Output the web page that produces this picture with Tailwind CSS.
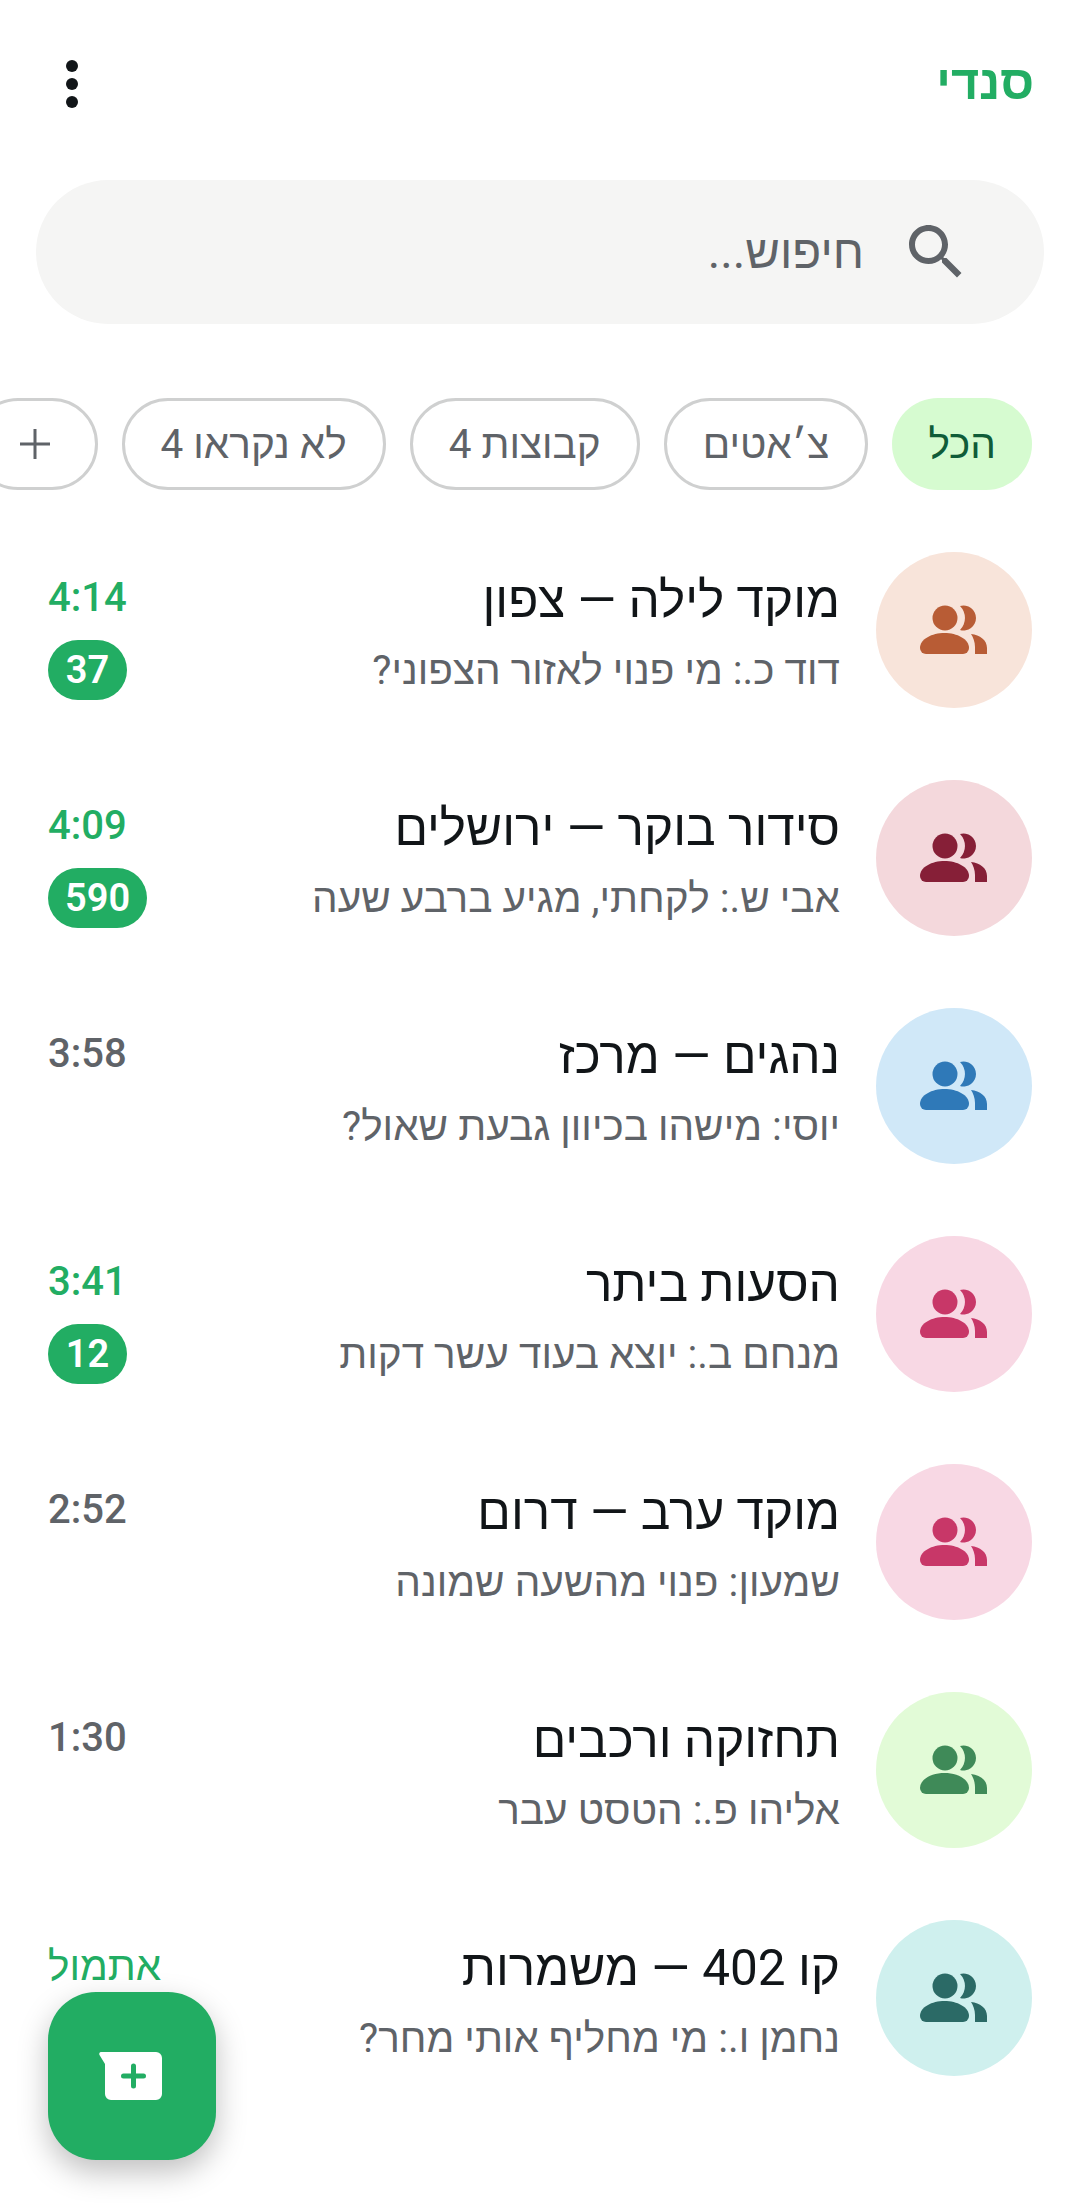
<!DOCTYPE html>
<html lang="he" dir="rtl">
<head>
<meta charset="utf-8">
<script src="https://cdn.jsdelivr.net/npm/@tailwindcss/browser@4"></script>
</head>
<body class="bg-white">
<div class="relative w-[1080px] h-[2208px] overflow-hidden bg-white font-['Roboto','Noto_Sans',sans-serif]">
  <header class="h-[180px] flex items-start justify-between pr-[46px] pl-[66px] pt-[59px]">
    <span class="text-[48.5px] leading-[48px] font-bold text-[#22ad63]">סנדי</span>
    <svg class="w-[12px] h-[48px] mt-[1px]" viewBox="0 0 12 48"><circle cx="6" cy="6" r="6" fill="#111518"/><circle cx="6" cy="24" r="6" fill="#111518"/><circle cx="6" cy="42" r="6" fill="#111518"/></svg>
  </header>
  <div class="mx-[36px] h-[144px] rounded-[72px] bg-[#f5f5f4] flex items-center pr-[72px] gap-[36px]">
    <svg class="w-[72px] h-[72px]" viewBox="0 0 24 24" fill="#5f6368"><path d="M15.500 14h-.79l-.28-.27C15.410 12.590 16 11.110 16 9.500 16 5.910 13.090 3 9.500 3S3 5.910 3 9.500 5.910 16 9.500 16c1.610 0 3.090-.59 4.230-1.570l.27.28v.79l5 4.990L20.490 19l-4.990-5zm-6 0C7.010 14 5 11.990 5 9.500S7.010 5 9.500 5 14 7.010 14 9.500 11.990 14 9.500 14z"/></svg>
    <span class="text-[47.5px] text-[#5f6368] relative top-[1px]">חיפוש...</span>
  </div>
  <div class="mt-[74px] h-[92px] flex gap-[24px] pr-[48px] whitespace-nowrap text-[40.5px]">
    <span class="shrink-0 h-[92px] rounded-[46px] bg-[#d6fbd0] text-[#0f5c38] px-[36px] flex items-center">הכל</span>
    <span class="shrink-0 h-[92px] rounded-[46px] border-[3px] border-[#cfd0d0] text-[#5f6368] px-[36px] flex items-center">צ׳אטים</span>
    <span class="shrink-0 h-[92px] rounded-[46px] border-[3px] border-[#cfd0d0] text-[#5f6368] px-[36px] flex items-center">קבוצות 4</span>
    <span class="shrink-0 h-[92px] rounded-[46px] border-[3px] border-[#cfd0d0] text-[#5f6368] px-[36px] flex items-center">לא נקראו 4</span>
    <span class="shrink-0 h-[92px] rounded-[46px] border-[3px] border-[#cfd0d0] text-[#5f6368] px-[45px] flex items-center"><svg class="w-[30px] h-[30px]" viewBox="0 0 30 30" fill="#5f6368"><path d="M13.500 0h3v13.500H30v3H16.500V30h-3V16.500H0v-3h13.500z"/></svg></span>
  </div>
  <ul class="mt-[62px]">
    <li class="h-[228px] flex items-start pr-[48px] pl-[48px]">
      <div class="w-[156px] h-[156px] shrink-0 rounded-full bg-[#f8e4da] text-[#b85c35] flex items-center justify-center"><svg class="w-[72px] h-[72px]" viewBox="0 0 72 72" fill="currentColor"><circle cx="27" cy="24" r="12.500"/><path d="M42 12A12.500 12.500 0 1 1 42 36 17 17 0 0 0 42 12Z"/><path d="M8 60H45a6 6 0 0 0 6-6c0-9-12-15-24.500-15S2 45 2 54a6 6 0 0 0 6 6Z"/><path d="M53 40C62 41 69 46 69 54V60H57V53C57 48 55 43 53 40Z"/></svg></div>
      <div class="flex-1 min-w-0 mr-[36px]"><div class="text-[49.5px] leading-[66px] text-[#111518] mt-[15px]">מוקד לילה — צפון</div><div class="text-[40.5px] leading-[54px] text-[#5f6368] mt-[10px]">דוד כ.: מי פנוי לאזור הצפוני?</div></div>
      <div class="flex flex-col items-end mt-[26px]"><span class="text-[40px] leading-[40px] font-medium text-[#22ad63]" dir="ltr">4:14</span><span class="mt-[22px] h-[60px] min-w-[79px] px-[17px] rounded-[30px] bg-[#22ad63] text-white text-[38px] font-semibold flex items-center justify-center">37</span></div>
    </li>
    <li class="h-[228px] flex items-start pr-[48px] pl-[48px]">
      <div class="w-[156px] h-[156px] shrink-0 rounded-full bg-[#f4d8dc] text-[#861f37] flex items-center justify-center"><svg class="w-[72px] h-[72px]" viewBox="0 0 72 72" fill="currentColor"><circle cx="27" cy="24" r="12.500"/><path d="M42 12A12.500 12.500 0 1 1 42 36 17 17 0 0 0 42 12Z"/><path d="M8 60H45a6 6 0 0 0 6-6c0-9-12-15-24.500-15S2 45 2 54a6 6 0 0 0 6 6Z"/><path d="M53 40C62 41 69 46 69 54V60H57V53C57 48 55 43 53 40Z"/></svg></div>
      <div class="flex-1 min-w-0 mr-[36px]"><div class="text-[49.5px] leading-[66px] text-[#111518] mt-[15px]">סידור בוקר — ירושלים</div><div class="text-[40.5px] leading-[54px] text-[#5f6368] mt-[10px]">אבי ש.: לקחתי, מגיע ברבע שעה</div></div>
      <div class="flex flex-col items-end mt-[26px]"><span class="text-[40px] leading-[40px] font-medium text-[#22ad63]" dir="ltr">4:09</span><span class="mt-[22px] h-[60px] min-w-[79px] px-[17px] rounded-[30px] bg-[#22ad63] text-white text-[38px] font-semibold flex items-center justify-center">590</span></div>
    </li>
    <li class="h-[228px] flex items-start pr-[48px] pl-[48px]">
      <div class="w-[156px] h-[156px] shrink-0 rounded-full bg-[#d0e8f8] text-[#2f79b8] flex items-center justify-center"><svg class="w-[72px] h-[72px]" viewBox="0 0 72 72" fill="currentColor"><circle cx="27" cy="24" r="12.500"/><path d="M42 12A12.500 12.500 0 1 1 42 36 17 17 0 0 0 42 12Z"/><path d="M8 60H45a6 6 0 0 0 6-6c0-9-12-15-24.500-15S2 45 2 54a6 6 0 0 0 6 6Z"/><path d="M53 40C62 41 69 46 69 54V60H57V53C57 48 55 43 53 40Z"/></svg></div>
      <div class="flex-1 min-w-0 mr-[36px]"><div class="text-[49.5px] leading-[66px] text-[#111518] mt-[15px]">נהגים — מרכז</div><div class="text-[40.5px] leading-[54px] text-[#5f6368] mt-[10px]">יוסי: מישהו בכיוון גבעת שאול?</div></div>
      <div class="flex flex-col items-end mt-[26px]"><span class="text-[40px] leading-[40px] font-medium text-[#5f6368]" dir="ltr">3:58</span></div>
    </li>
    <li class="h-[228px] flex items-start pr-[48px] pl-[48px]">
      <div class="w-[156px] h-[156px] shrink-0 rounded-full bg-[#f8d8e4] text-[#c83768] flex items-center justify-center"><svg class="w-[72px] h-[72px]" viewBox="0 0 72 72" fill="currentColor"><circle cx="27" cy="24" r="12.500"/><path d="M42 12A12.500 12.500 0 1 1 42 36 17 17 0 0 0 42 12Z"/><path d="M8 60H45a6 6 0 0 0 6-6c0-9-12-15-24.500-15S2 45 2 54a6 6 0 0 0 6 6Z"/><path d="M53 40C62 41 69 46 69 54V60H57V53C57 48 55 43 53 40Z"/></svg></div>
      <div class="flex-1 min-w-0 mr-[36px]"><div class="text-[49.5px] leading-[66px] text-[#111518] mt-[15px]">הסעות ביתר</div><div class="text-[40.5px] leading-[54px] text-[#5f6368] mt-[10px]">מנחם ב.: יוצא בעוד עשר דקות</div></div>
      <div class="flex flex-col items-end mt-[26px]"><span class="text-[40px] leading-[40px] font-medium text-[#22ad63]" dir="ltr">3:41</span><span class="mt-[22px] h-[60px] min-w-[79px] px-[17px] rounded-[30px] bg-[#22ad63] text-white text-[38px] font-semibold flex items-center justify-center">12</span></div>
    </li>
    <li class="h-[228px] flex items-start pr-[48px] pl-[48px]">
      <div class="w-[156px] h-[156px] shrink-0 rounded-full bg-[#f8d8e4] text-[#c83768] flex items-center justify-center"><svg class="w-[72px] h-[72px]" viewBox="0 0 72 72" fill="currentColor"><circle cx="27" cy="24" r="12.500"/><path d="M42 12A12.500 12.500 0 1 1 42 36 17 17 0 0 0 42 12Z"/><path d="M8 60H45a6 6 0 0 0 6-6c0-9-12-15-24.500-15S2 45 2 54a6 6 0 0 0 6 6Z"/><path d="M53 40C62 41 69 46 69 54V60H57V53C57 48 55 43 53 40Z"/></svg></div>
      <div class="flex-1 min-w-0 mr-[36px]"><div class="text-[49.5px] leading-[66px] text-[#111518] mt-[15px]">מוקד ערב — דרום</div><div class="text-[40.5px] leading-[54px] text-[#5f6368] mt-[10px]">שמעון: פנוי מהשעה שמונה</div></div>
      <div class="flex flex-col items-end mt-[26px]"><span class="text-[40px] leading-[40px] font-medium text-[#5f6368]" dir="ltr">2:52</span></div>
    </li>
    <li class="h-[228px] flex items-start pr-[48px] pl-[48px]">
      <div class="w-[156px] h-[156px] shrink-0 rounded-full bg-[#e2fbd7] text-[#3f8a58] flex items-center justify-center"><svg class="w-[72px] h-[72px]" viewBox="0 0 72 72" fill="currentColor"><circle cx="27" cy="24" r="12.500"/><path d="M42 12A12.500 12.500 0 1 1 42 36 17 17 0 0 0 42 12Z"/><path d="M8 60H45a6 6 0 0 0 6-6c0-9-12-15-24.500-15S2 45 2 54a6 6 0 0 0 6 6Z"/><path d="M53 40C62 41 69 46 69 54V60H57V53C57 48 55 43 53 40Z"/></svg></div>
      <div class="flex-1 min-w-0 mr-[36px]"><div class="text-[49.5px] leading-[66px] text-[#111518] mt-[15px]">תחזוקה ורכבים</div><div class="text-[40.5px] leading-[54px] text-[#5f6368] mt-[10px]">אליהו פ.: הטסט עבר</div></div>
      <div class="flex flex-col items-end mt-[26px]"><span class="text-[40px] leading-[40px] font-medium text-[#5f6368]" dir="ltr">1:30</span></div>
    </li>
    <li class="h-[228px] flex items-start pr-[48px] pl-[48px]">
      <div class="w-[156px] h-[156px] shrink-0 rounded-full bg-[#cff0ee] text-[#2b6a66] flex items-center justify-center"><svg class="w-[72px] h-[72px]" viewBox="0 0 72 72" fill="currentColor"><circle cx="27" cy="24" r="12.500"/><path d="M42 12A12.500 12.500 0 1 1 42 36 17 17 0 0 0 42 12Z"/><path d="M8 60H45a6 6 0 0 0 6-6c0-9-12-15-24.500-15S2 45 2 54a6 6 0 0 0 6 6Z"/><path d="M53 40C62 41 69 46 69 54V60H57V53C57 48 55 43 53 40Z"/></svg></div>
      <div class="flex-1 min-w-0 mr-[36px]"><div class="text-[49.5px] leading-[66px] text-[#111518] mt-[15px]">קו 402 — משמרות</div><div class="text-[40.5px] leading-[54px] text-[#5f6368] mt-[10px]">נחמן ו.: מי מחליף אותי מחר?</div></div>
      <div class="flex flex-col items-end mt-[26px]"><span class="text-[40.5px] leading-[40px] text-[#22ad63]">אתמול</span></div>
    </li>
  </ul>
  <button class="absolute left-[48px] top-[1992px] w-[168px] h-[168px] rounded-[48px] bg-[#22ad63] shadow-[0_12px_30px_rgba(0,0,0,0.25)] flex items-center justify-center">
    <svg class="w-[72px] h-[72px]" viewBox="0 0 72 72"><path fill="#fff" d="M5 12H60a6 6 0 0 1 6 6V54a6 6 0 0 1-6 6H15a6 6 0 0 1-6-6V24L3.500 15a2 2 0 0 1 1.500-3Z"/><path stroke="#22ad63" stroke-width="5" stroke-linecap="round" d="M37.500 26V46M27.500 36H47.500"/></svg>
  </button>
</div>
</body>
</html>
